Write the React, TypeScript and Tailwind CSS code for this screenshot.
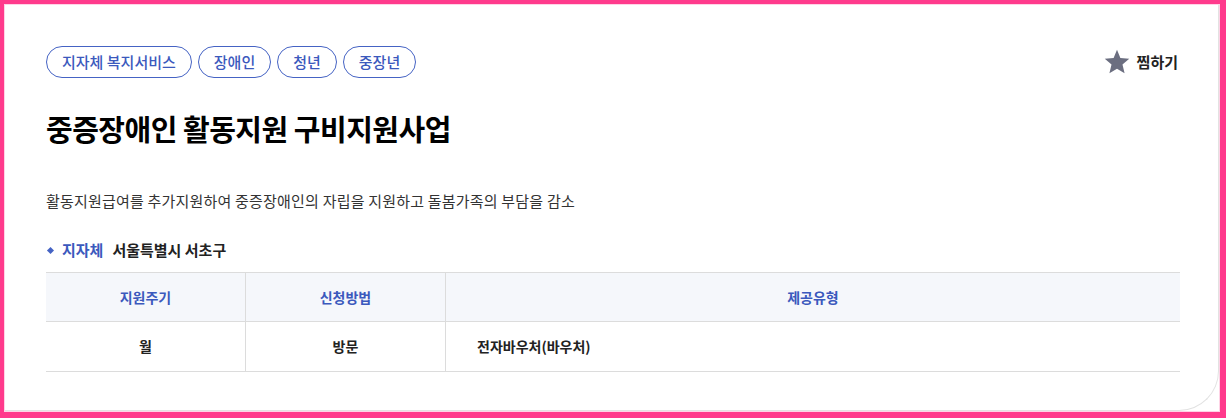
import React from "react"

const tags = ["지자체 복지서비스", "장애인", "청년", "중장년"]

export default function App() {
  return (
    <div
      className="w-[1226px] h-[418px] bg-[#ff3a8c] pt-[4px] pl-[4px] pr-[6px] pb-[6px]"
      style={{ fontFamily: '"Noto Sans CJK KR", "Noto Sans", sans-serif' }}
    >
      <div className="h-full w-full bg-white border border-[#ffd3e6] overflow-hidden">
        <div className="h-full w-full border-r border-b border-[#e2e2e2] rounded-br-[40px] pl-[41px] pr-[38px] pt-[41px]">
          {/* tags + bookmark */}
          <div className="flex items-center justify-between">
            <div className="flex gap-[6px]">
              {tags.map((t) => (
                <span
                  key={t}
                  className="h-[32px] px-[15px] flex items-center rounded-full border border-[#4563c4] text-[#3b59bd] text-[15px] font-medium"
                >
                  {t}
                </span>
              ))}
            </div>
            <button className="mr-[2px] flex items-center gap-[6px] text-[15px] font-bold text-[#222]">
              <svg width="28" height="28" viewBox="0 0 24 24">
                <polygon
                  points="12,1.5 14.9,8.6 22.5,9.2 16.7,14.2 18.5,21.7 12,17.7 5.5,21.7 7.3,14.2 1.5,9.2 9.1,8.6"
                  fill="#6b6e80"
                />
              </svg>
              찜하기
            </button>
          </div>

          {/* title */}
          <h1 className="mt-[30px] text-[29px] font-bold text-black leading-[40px] tracking-[-0.5px]">
            중증장애인 활동지원 구비지원사업
          </h1>

          {/* description */}
          <p className="mt-[41px] text-[15px] text-[#333] leading-[24px] tracking-[0.2px]">
            활동지원급여를 추가지원하여 중증장애인의 자립을 지원하고 돌봄가족의 부담을 감소
          </p>

          {/* region */}
          <div className="mt-[25px] flex items-center text-[15px] font-bold leading-[24px]">
            <span className="w-[5px] h-[5px] bg-[#4563c4] rotate-45 ml-[2px] mr-[9px]" />
            <span className="text-[#3b59bd]">지자체</span>
            <span className="ml-[9px] text-[#222]">서울특별시 서초구</span>
          </div>

          {/* table */}
          <div className="mt-[10px] border-t border-b border-[#dcdcdc] text-[14px]">
            <div className="grid grid-cols-[200px_200px_1fr] h-[49px] bg-[#f5f7fb] border-b border-[#dcdcdc] text-[#3b59bd] font-semibold">
              <div className="flex items-center justify-center border-r border-[#dcdcdc]">지원주기</div>
              <div className="flex items-center justify-center border-r border-[#dcdcdc]">신청방법</div>
              <div className="flex items-center justify-center">제공유형</div>
            </div>
            <div className="grid grid-cols-[200px_200px_1fr] h-[49px] text-[#222] font-bold">
              <div className="flex items-center justify-center border-r border-[#dcdcdc]">월</div>
              <div className="flex items-center justify-center border-r border-[#dcdcdc]">방문</div>
              <div className="flex items-center pl-[31px]">전자바우처(바우처)</div>
            </div>
          </div>
        </div>
      </div>
    </div>
  )
}
